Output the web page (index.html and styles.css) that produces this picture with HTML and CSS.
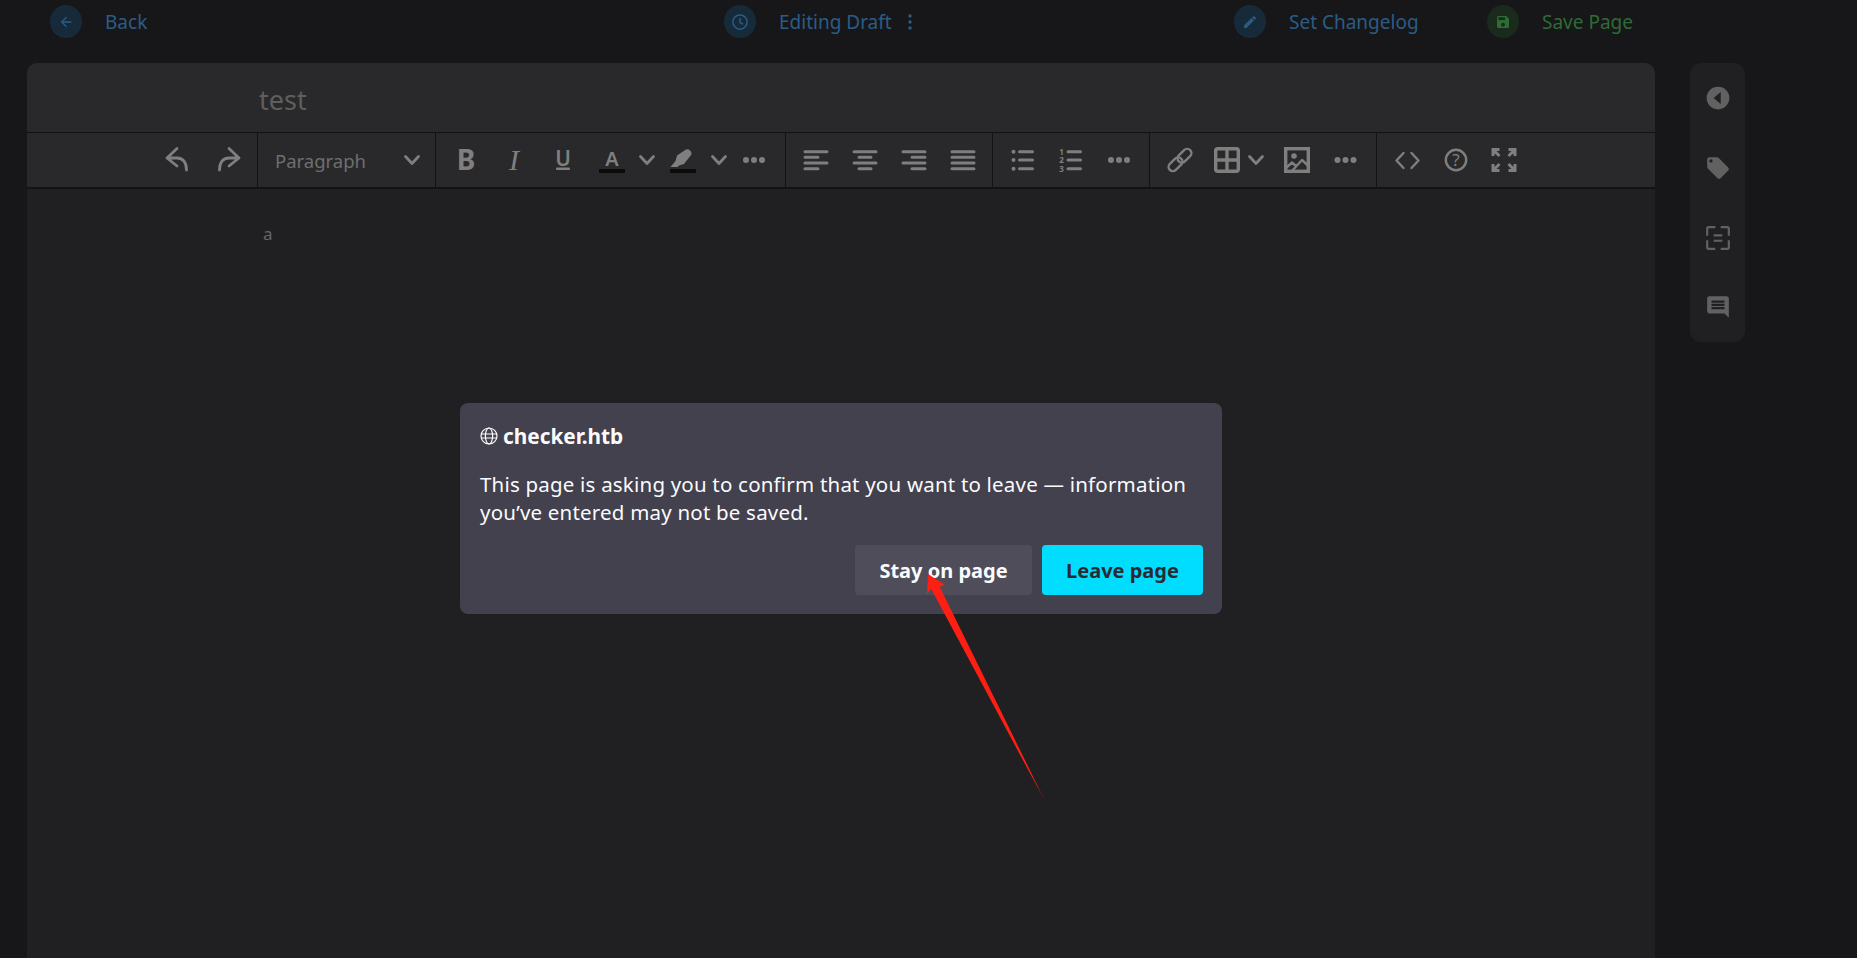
FILE: index.html
```html
<!DOCTYPE html>
<html lang="en">
<head>
<meta charset="utf-8">
<title>Editing Draft</title>
<link rel="stylesheet" href="styles.css">
</head>
<body>
<header class="topbar">
  <div class="act blue"><span class="disc"><svg class="mi" viewBox="0 0 24 24"><path d="M20,11V13H8L13.5,18.5L12.08,19.92L4.16,12L12.08,4.08L13.5,5.5L8,11H20Z"/></svg></span><span class="lbl">Back</span></div>
  <div class="act blue"><span class="disc"><svg class="mi lg" viewBox="0 0 24 24"><circle class="ln" cx="12" cy="12" r="9.5"/><path class="ln" d="M12 6.5V12.5L16 15"/></svg></span><span class="lbl">Editing Draft</span><svg class="kebab" viewBox="0 0 6 18"><circle cx="3" cy="3" r="1.7"/><circle cx="3" cy="9" r="1.7"/><circle cx="3" cy="15" r="1.7"/></svg></div>
  <div class="act blue"><span class="disc"><svg class="mi" viewBox="0 0 24 24"><path d="M20.71,7.04C21.1,6.65 21.1,6 20.71,5.63L18.37,3.29C18,2.9 17.35,2.9 16.96,3.29L15.12,5.12L18.87,8.87M3,17.25V21H6.75L17.81,9.93L14.06,6.18L3,17.25Z"/></svg></span><span class="lbl">Set Changelog</span></div>
  <div class="act green"><span class="disc"><svg class="mi" viewBox="0 0 24 24"><path d="M15,9H5V5H15M12,19A3,3 0 0,1 9,16A3,3 0 0,1 12,13A3,3 0 0,1 15,16A3,3 0 0,1 12,19M17,3H5C3.89,3 3,3.9 3,5V19A2,2 0 0,0 5,21H19A2,2 0 0,0 21,19V7L17,3Z"/></svg></span><span class="lbl">Save Page</span></div>
</header>

<main class="workspace">
  <section class="card">
    <div class="title">test</div>
    <div class="toolbar">
      <div class="grp g1">
        <span class="tb w52"><svg class="ic" viewBox="0 0 26 26"><path class="s" d="M13 1.5L3 11L13 19M3 11H13C19.5 11 22.5 16 22.5 23"/></svg></span>
        <span class="tb w52"><svg class="ic flip" viewBox="0 0 26 26"><path class="s" d="M13 1.5L3 11L13 19M3 11H13C19.5 11 22.5 16 22.5 23"/></svg></span>
      </div>
      <div class="grp g2">
        <span class="sel">Paragraph</span>
        <svg class="ic" viewBox="0 0 26 26"><path class="s" d="M6.5 9.5L13 16.5L19.5 9.5"/></svg>
      </div>
      <div class="grp g3">
        <span class="tb"><svg class="ic" viewBox="0 0 26 26"><text class="t-b" x="13" y="23">B</text></svg></span>
        <span class="tb"><svg class="ic" viewBox="0 0 26 26"><text class="t-i" x="13" y="23">I</text></svg></span>
        <span class="tb"><svg class="ic" viewBox="0 0 26 26"><text class="t-u" x="14" y="18.5">U</text><rect class="f" x="7" y="20.5" width="14" height="2.6" rx="1"/></svg></span>
        <span class="tb"><svg class="ic" viewBox="0 0 26 26"><text class="t-a" x="15" y="19">A</text><rect class="bar" x="2" y="22" width="26" height="4"/></svg></span>
        <span class="tb chev"><svg class="ic" viewBox="0 0 26 26"><path class="s" d="M6.5 9.5L13 16.5L19.5 9.5"/></svg></span>
        <span class="tb"><svg class="ic" viewBox="0 0 26 26"><path class="f" d="M1.500 20L6.500 14L8 8.500L17 2.500Q19 1.500 21 3.500Q23.500 6 22 8L15 17L10 18.500L8.500 20Z"/><rect class="bar" x="1" y="22" width="26" height="4"/></svg></span>
        <span class="tb chev"><svg class="ic" viewBox="0 0 26 26"><path class="s" d="M6.5 9.5L13 16.5L19.5 9.5"/></svg></span>
        <span class="tb"><svg class="ic" viewBox="0 0 26 26"><circle class="f" cx="5" cy="13" r="3"/><circle class="f" cx="13" cy="13" r="3"/><circle class="f" cx="21" cy="13" r="3"/></svg></span>
      </div>
      <div class="grp g4">
        <span class="tb w49"><svg class="ic" viewBox="0 0 26 26"><path class="l" d="M2 4.7H24M2 10.3H15M2 16H24M2 21.7H15"/></svg></span>
        <span class="tb w49"><svg class="ic" viewBox="0 0 26 26"><path class="l" d="M2 4.7H24M7 10.3H19M2 16H24M7 21.7H19"/></svg></span>
        <span class="tb w49"><svg class="ic" viewBox="0 0 26 26"><path class="l" d="M2 4.7H24M11 10.3H24M2 16H24M11 21.7H24"/></svg></span>
        <span class="tb w49"><svg class="ic" viewBox="0 0 26 26"><path class="l" d="M2 4.7H24M2 10.3H24M2 16H24M2 21.7H24"/></svg></span>
      </div>
      <div class="grp g5">
        <span class="tb"><svg class="ic" viewBox="0 0 26 26"><circle class="f" cx="4.5" cy="4.7" r="2"/><circle class="f" cx="4.5" cy="13" r="2"/><circle class="f" cx="4.5" cy="21.7" r="2"/><path class="l" d="M10.5 4.7H23.5M10.5 13H23.5M10.5 21.7H23.5"/></svg></span>
        <span class="tb"><svg class="ic" viewBox="0 0 26 26"><text class="t-n" x="4.5" y="7.500">1</text><text class="t-n" x="4.5" y="16">2</text><text class="t-n" x="4.5" y="24.500">3</text><path class="l" d="M11 4.7H23.5M11 13H23.5M11 21.7H23.5"/></svg></span>
        <span class="tb"><svg class="ic" viewBox="0 0 26 26"><circle class="f" cx="6" cy="13" r="3"/><circle class="f" cx="14" cy="13" r="3"/><circle class="f" cx="22" cy="13" r="3"/></svg></span>
      </div>
      <div class="grp g6">
        <span class="tb"><svg class="ic" viewBox="0 0 26 26"><rect class="t" x="9.5" y="4.5" width="16" height="8.5" rx="4.25" transform="rotate(-45 17.5 8.75)"/><rect class="t" x="0.5" y="13" width="16" height="8.5" rx="4.25" transform="rotate(-45 8.5 17.25)"/></svg></span>
        <span class="tb w46"><svg class="ic" viewBox="0 0 26 26"><rect class="t2" x="1.7" y="1.7" width="22.600" height="22.600" rx="2"/><path class="t2" d="M13 1.7V24.300M1.700 13H24.300"/></svg></span>
        <span class="tb w14"><svg class="ic" viewBox="0 0 26 26"><path class="s" d="M6.5 9.5L13 16.5L19.5 9.5"/></svg></span>
        <span class="tb after"><svg class="ic" viewBox="0 0 26 26"><rect class="t2" x="1.7" y="1.700" width="22.600" height="22.600"/><circle class="f" cx="10" cy="9" r="2.8"/><path class="t" d="M2 21L8 15.5L12 19M7 25L18 13L25 19.5"/></svg></span>
        <span class="tb"><svg class="ic" viewBox="0 0 26 26"><circle class="f" cx="5.5" cy="13" r="3"/><circle class="f" cx="13.5" cy="13" r="3"/><circle class="f" cx="21.5" cy="13" r="3"/></svg></span>
      </div>
      <div class="grp g7">
        <span class="tb"><svg class="ic" viewBox="0 0 26 26"><path class="t" d="M9.5 6L2.5 13.5L9.5 21M17.5 6L24.5 13.5L17.5 21"/></svg></span>
        <span class="tb"><svg class="ic" viewBox="0 0 26 26"><circle class="t" cx="14" cy="13" r="10.2"/><text class="t-h" x="14" y="19">?</text></svg></span>
        <span class="tb"><svg class="ic" viewBox="0 0 26 26"><path class="t3" d="M3 9V2.5H9.5M3 2.5L9.5 9M25 9V2.5H18.5M25 2.5L18.5 9M3 17V23.5H9.5M3 23.5L9.5 17M25 17V23.5H18.5M25 23.5L18.5 17"/></svg></span>
      </div>
    </div>
    <div class="body"><p class="para">a</p></div>
  </section>

  <aside class="rail">
    <span class="rail-item"><svg class="ri" viewBox="0 0 24 24"><path d="M12 1.5A10.5 10.5 0 1 0 12 22.500A10.500 10.500 0 1 0 12 1.500ZM14.500 6.500V17.500L8 12Z" fill-rule="evenodd"/></svg></span>
    <span class="rail-item"><svg class="ri" viewBox="0 0 24 24"><path d="M5.5,7A1.5,1.5 0 0,1 4,5.5A1.5,1.5 0 0,1 5.5,4A1.5,1.5 0 0,1 7,5.5A1.5,1.5 0 0,1 5.500,7M21.41,11.58L12.41,2.58C12.05,2.22 11.55,2 11,2H4C2.89,2 2,2.89 2,4V11C2,11.55 2.22,12.05 2.59,12.41L11.58,21.41C11.95,21.77 12.45,22 13,22C13.55,22 14.05,21.77 14.41,21.41L21.41,14.41C21.78,14.05 22,13.55 22,13C22,12.44 21.77,11.94 21.41,11.58Z"/></svg></span>
    <span class="rail-item"><svg class="ri" viewBox="0 0 24 24"><path class="rs" d="M9.500 2H3.500Q2 2 2 3.500V10M14.500 2H20.500Q22 2 22 3.500V10M2 14V20.500Q2 22 3.500 22H9.500M22 14V20.500Q22 22 20.500 22H14.500M8 9.500H16M8 14.500H16"/></svg></span>
    <span class="rail-item up1"><svg class="ri" viewBox="0 0 24 24"><path d="M20 2H4c-1.100 0-2 .9-2 2v12c0 1.100.9 2 2 2h14l4 4V4c0-1.100-.9-2-2-2zm-2 12H6v-2h12v2zm0-3H6V9h12v2zm0-3H6V6h12v2z"/></svg></span>
  </aside>
</main>

<div class="dialog">
  <div class="origin"><svg class="globe" viewBox="0 0 18 18"><circle cx="9" cy="9" r="8"/><ellipse cx="9" cy="9" rx="3.600" ry="8"/><path d="M1 7H17M1 11H17"/></svg><span>checker.htb</span></div>
  <p class="msg">This page is asking you to confirm that you want to leave — information you’ve entered may not be saved.</p>
  <div class="actions">
    <button class="btn stay">Stay on page</button>
    <button class="btn leave">Leave page</button>
  </div>
</div>

<svg class="arrow" viewBox="0 0 140 250">
  <defs><linearGradient id="fade" gradientUnits="userSpaceOnUse" x1="0" y1="205" x2="0" y2="236"><stop offset="0" stop-color="#ff1e12"/><stop offset="1" stop-color="#4a1512"/></linearGradient></defs>
  <path fill="url(#fade)" d="M8 4L25 15L19.500 16.500L127 235L11 18.500L7 24Z"/>
</svg>
</body>
</html>
```

FILE: styles.css
```css
* { box-sizing: border-box; }
html, body { margin: 0; height: 958px; overflow: hidden; }
body { background: #17171a; font-family: "Noto Sans", sans-serif; position: relative; }

.topbar {
  height: 63px; padding: 5px 0 0 50px;
  display: grid; grid-template-columns: 674px 510px 253px auto; align-content: start;
}
.act { display: flex; align-items: center; height: 33px; }
.disc { width: 32px; height: 33px; border-radius: 50%; display: flex; align-items: center; justify-content: center; flex: none; }
.lbl { margin-left: 23px; font-size: 19px; }
.blue .disc { background: #172a3a; }
.blue { color: #2b5c85; fill: #2b5c85; stroke: #2b5c85; }
.green .disc { background: #1a2b1d; }
.green { color: #2e6b35; fill: #2e6b35; stroke: #2e6b35; }
.mi { width: 16px; height: 16px; stroke: none; }
.mi.lg { width: 18px; height: 18px; }
.mi .ln { fill: none; stroke: #2b5c85; stroke-width: 2; }
.kebab { width: 6px; height: 18px; margin-left: 15px; stroke: none; }

.workspace { display: flex; align-items: flex-start; padding-left: 27px; }
.card { width: 1628px; height: 895px; background: #202022; border-radius: 10px 10px 0 0; overflow: hidden; display: flex; flex-direction: column; }
.title { height: 69px; background: #29292b; padding: 19px 0 0 232px; font-size: 27px; line-height: 36px; color: #5e5e5e; }
.toolbar { height: 57px; display: flex; background: #29292b; border-top: 1px solid #121214; border-bottom: 2px solid #131315; }
.grp { display: flex; align-items: center; border-right: 1px solid #121214; height: 100%; flex: none; }
.g1 { width: 231px; justify-content: flex-end; padding-right: 2px; }
.g2 { width: 178px; padding-left: 17px; justify-content: space-between; padding-right: 10px; }
.g3 { width: 350px; padding-left: 6px; }
.g4 { width: 207px; padding-left: 5px; }
.g5 { width: 157px; padding-left: 5px; }
.g6 { width: 227px; padding-left: 6px; }
.g7 { flex: 1; padding-left: 6px; border-right: 0; }
.tb { width: 48px; height: 26px; display: flex; justify-content: center; flex: none; }
.w52 { width: 52px; }
.w49 { width: 49px; }
.w46 { width: 46px; }
.w14 { width: 14px; margin-left: -1px; }
.chev { width: 24px; padding-left: 2px; }
.after { margin-left: 10px; }
.sel { font-size: 18.500px; color: #6e6e6e; }
.ic { width: 26px; height: 26px; overflow: visible; flex: none; }
.flip { transform: scaleX(-1); }
.s { fill: none; stroke: #7f7f7f; stroke-width: 2.8; stroke-linecap: round; stroke-linejoin: round; }
.l { fill: none; stroke: #7f7f7f; stroke-width: 3; stroke-linecap: round; }
.t { fill: none; stroke: #7f7f7f; stroke-width: 2.400; stroke-linecap: round; stroke-linejoin: round; }
.t2 { fill: none; stroke: #7f7f7f; stroke-width: 3.400; }
.t3 { fill: none; stroke: #7f7f7f; stroke-width: 3; }
.f { fill: #7f7f7f; }
.bar { fill: #0c0c0d; }
text { fill: #7f7f7f; text-anchor: middle; }
.t-b { font: 700 28px "Noto Sans", sans-serif; }
.t-i { font: italic 400 30px "Liberation Serif", serif; }
.t-u { font: 600 21px "Noto Sans", sans-serif; }
.t-a { font: 600 20px "Noto Sans", sans-serif; }
.t-n { font: 700 8px "Noto Sans", sans-serif; }
.t-h { font: 400 17px "Noto Sans", sans-serif; }
.body { flex: 1; padding: 0 0 0 236px; }
.para { margin: 33px 0 0; font-size: 17px; line-height: 24px; color: #666; }

.rail { width: 55px; height: 279px; margin-left: 35px; background: #202022; border-radius: 11px; display: flex; flex-direction: column; }
.rail-item { height: 70px; display: flex; align-items: center; justify-content: center; flex: none; }
.up1 { padding-bottom: 2px; }
.ri { width: 26px; height: 26px; fill: #616161; }
.rs { fill: none; stroke: #616161; stroke-width: 2; }

.dialog {
  position: absolute; left: 460px; top: 403px; width: 762px; height: 211px;
  background: #42414d; border-radius: 8px; padding: 19px 19px 19px 20px; color: #fbfbfe;
  display: flex; flex-direction: column;
}
.origin { display: flex; align-items: center; font-size: 20.800px; font-weight: 700; height: 28px; }
.origin span { margin-left: 5px; }
.globe { width: 18px; height: 18px; fill: none; stroke: #fbfbfe; stroke-width: 1.200; flex: none; }
.msg { margin: 20px 0 0; font-size: 20.500px; letter-spacing: 0.2px; line-height: 28px; }
.actions { margin-top: auto; display: flex; justify-content: flex-end; gap: 10px; }
.btn { height: 50px; border: 0; border-radius: 4px; font: 700 20px "Noto Sans", sans-serif; padding: 0; }
.stay { width: 177px; background: #4e4d59; color: #fbfbfe; }
.leave { width: 161px; background: #00ddff; color: #2b2a33; }
.arrow { position: absolute; left: 920px; top: 570px; width: 140px; height: 250px; }
```
